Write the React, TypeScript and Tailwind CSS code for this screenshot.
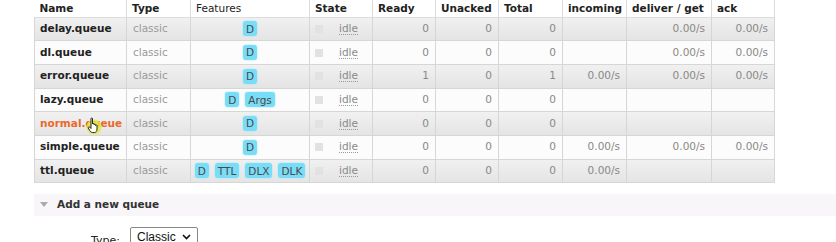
import React from "react";

type Row = {
  name: string;
  features: string[];
  ready: string;
  unacked: string;
  total: string;
  incoming: string;
  deliver: string;
  ack: string;
  highlight?: boolean;
};

const rows: Row[] = [
  { name: "delay.queue", features: ["D"], ready: "0", unacked: "0", total: "0", incoming: "", deliver: "0.00/s", ack: "0.00/s" },
  { name: "dl.queue", features: ["D"], ready: "0", unacked: "0", total: "0", incoming: "", deliver: "0.00/s", ack: "0.00/s" },
  { name: "error.queue", features: ["D"], ready: "1", unacked: "0", total: "1", incoming: "0.00/s", deliver: "0.00/s", ack: "0.00/s" },
  { name: "lazy.queue", features: ["D", "Args"], ready: "0", unacked: "0", total: "0", incoming: "", deliver: "", ack: "" },
  { name: "normal.queue", features: ["D"], ready: "0", unacked: "0", total: "0", incoming: "", deliver: "", ack: "", highlight: true },
  { name: "simple.queue", features: ["D"], ready: "0", unacked: "0", total: "0", incoming: "0.00/s", deliver: "0.00/s", ack: "0.00/s" },
  { name: "ttl.queue", features: ["D", "TTL", "DLX", "DLK"], ready: "0", unacked: "0", total: "0", incoming: "0.00/s", deliver: "", ack: "" },
];

const cols = [92, 64, 119, 63, 63, 63, 64, 64, 85, 63];

function Cursor() {
  return (
    <svg className="absolute left-[86px] top-[117px]" width="16" height="18" viewBox="0 0 16 18">
      <ellipse cx="8" cy="10" rx="7.5" ry="7.5" fill="#dfe83a" opacity="0.8" />
      <path
        d="M5 1.5 C5 0.8 6.5 0.8 6.5 1.5 L6.5 7 C6.5 6.3 8 6.3 8 7 L8 7.8 C8 7.1 9.5 7.1 9.5 7.8 L9.5 8.5 C9.5 7.8 11 7.8 11 8.5 L11 12 C11 14 10 15.5 8.5 15.5 L6.5 15.5 C5 15.5 4.3 14.3 3.6 13.3 L2.3 11 C1.9 10.2 3 9.4 3.8 10.2 L5 11.5 Z"
        fill="#fff"
        stroke="#111"
        strokeWidth="0.9"
        strokeLinejoin="round"
      />
    </svg>
  );
}

export default function App() {
  return (
    <div className="relative w-[836px] h-[242px] overflow-hidden bg-white text-[10.5px] text-[#222]" style={{ fontFamily: '"DejaVu Sans", Verdana, sans-serif' }}>
      <div className="pl-[34px]">
        <table className="table-fixed border-collapse w-[740px]">
          <colgroup>
            {cols.map((w, i) => (
              <col key={i} style={{ width: w }} />
            ))}
          </colgroup>
          <thead>
            <tr className="h-[17px] bg-white">
              {["Name", "Type", "Features", "State", "Ready", "Unacked", "Total", "incoming", "deliver / get", "ack"].map((h) => (
                <th
                  key={h}
                  className={`text-left align-middle pl-[5px] border-r border-b border-[#dcdcdc] whitespace-nowrap leading-none ${h === "Features" ? "font-normal" : "font-bold"}`}
                >
                  {h}
                </th>
              ))}
            </tr>
          </thead>
          <tbody>
            {rows.map((r, i) => (
              <tr
                key={r.name}
                className={`h-[23.7px] ${i % 2 === 0 ? "bg-gradient-to-b from-[#f1f1f1] to-[#e4e4e4]" : "bg-[#fcfcfc]"}`}
              >
                <td className={`pl-[5px] border-r border-b border-l border-[#d6d6d6] font-bold whitespace-nowrap ${r.highlight ? "text-[#ea6a2d]" : "text-[#222]"}`}>
                  {r.name}
                </td>
                <td className="pl-[6px] border-r border-b border-[#d6d6d6] text-[#9a9a9a]">classic</td>
                <td className="border-r border-b border-[#d6d6d6]">
                  <div className="flex justify-center gap-[6px]">
                    {r.features.map((f) => (
                      <span key={f} className="h-[15px] px-[3px] flex items-center rounded-[3px] bg-[#79ddf7] text-[#4a4a4a] leading-none shadow-[0_0_2px_#8ee6fb]">
                        {f}
                      </span>
                    ))}
                  </div>
                </td>
                <td className="border-r border-b border-[#d6d6d6]">
                  <div className="flex items-center pl-[5px]">
                    <span className="w-[8px] h-[8px] bg-[#e2e2e2] mr-[16px]" />
                    <span className="text-[#8a8a8a] border-b border-dotted border-[#999] leading-[11px]">idle</span>
                  </div>
                </td>
                {[r.ready, r.unacked, r.total, r.incoming, r.deliver, r.ack].map((v, j) => (
                  <td key={j} className="text-right pr-[6px] border-r border-b border-[#d6d6d6] text-[#888] whitespace-nowrap">
                    {v}
                  </td>
                ))}
              </tr>
            ))}
          </tbody>
        </table>
      </div>

      <div className="mt-[11px] ml-[34px] h-[22px] bg-[#f8f6f9] flex items-center">
        <svg className="ml-[6px]" width="8" height="6" viewBox="0 0 8 6">
          <path d="M0 0 L8 0 L4 5 Z" fill="#aaa" />
        </svg>
        <span className="ml-[9px] font-bold text-[#333]">Add a new queue</span>
      </div>

      <div className="mt-[11px] flex items-start">
        <span className="w-[120px] text-right pt-[6px] text-[#222] text-[11px]">Type:</span>
        <div className="ml-[10px] w-[68px] h-[20px] border border-[#888] rounded-[2px] flex items-center justify-between px-[6px] text-[12px] text-[#111]" style={{ fontFamily: '"Liberation Sans", Arial, sans-serif' }}>
          <span>Classic</span>
          <svg width="9" height="6" viewBox="0 0 9 6">
            <path d="M1 1 L4.5 4.5 L8 1" fill="none" stroke="#111" strokeWidth="1.6" />
          </svg>
        </div>
      </div>

      <Cursor />
    </div>
  );
}
